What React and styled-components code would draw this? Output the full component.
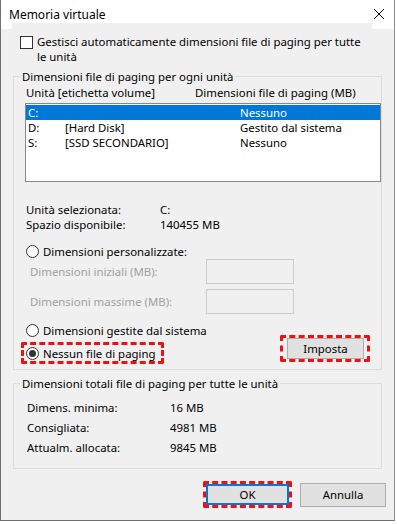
import React from 'react';
import styled, { createGlobalStyle } from 'styled-components';

const GlobalStyle = createGlobalStyle`
  html, body {
    margin: 0;
    padding: 0;
    background: #ffffff;
  }
  body {
    font-family: "Segoe UI", "Noto Sans", "Liberation Sans", sans-serif;
    font-size: 11.4px;
    color: #000;
  }
`;

const drives = [
  { letter: 'C:', label: '', size: 'Nessuno', selected: true },
  { letter: 'D:', label: '[Hard Disk]', size: 'Gestito dal sistema' },
  { letter: 'S:', label: '[SSD SECONDARIO]', size: 'Nessuno' },
];

const totals = [
  { label: 'Dimens. minima:', value: '16 MB' },
  { label: 'Consigliata:', value: '4981 MB' },
  { label: 'Attualm. allocata:', value: '9845 MB' },
];

const App = () => {
  return (
    <>
      <GlobalStyle />
      <Window>
        <TitleBar>
          <Title>Memoria virtuale</Title>
          <CloseIcon width="12" height="12" viewBox="0 0 12 12">
            <path d="M1 1 L11 11 M11 1 L1 11" stroke="#000" strokeWidth="1" fill="none" />
          </CloseIcon>
        </TitleBar>
        <Strip />
        <Body>
          <CheckRow>
            <CheckBox />
            <CheckText>
              Gestisci automaticamente dimensioni file di paging per tutte le unità
            </CheckText>
          </CheckRow>

          <Group $padBottom={5}>
            <Legend>Dimensioni file di paging per ogni unità</Legend>
            <HeaderRow>
              <span>Unità [etichetta volume]</span>
              <span>Dimensioni file di paging (MB)</span>
            </HeaderRow>
            <ListBox>
              {drives.map((d) => (
                <ListRow key={d.letter} $selected={d.selected}>
                  <LetterCell>{d.letter}</LetterCell>
                  <LabelCell>{d.label}</LabelCell>
                  <span>{d.size}</span>
                </ListRow>
              ))}
            </ListBox>

            <InfoGrid>
              <span>Unità selezionata:</span>
              <span>C:</span>
              <span>Spazio disponibile:</span>
              <span>140455 MB</span>
            </InfoGrid>

            <RadioRow $top={12}>
              <Radio />
              <span>Dimensioni personalizzate:</span>
            </RadioRow>
            <SizeRow>
              <DisabledLabel>Dimensioni iniziali (MB):</DisabledLabel>
              <SizeInput />
            </SizeRow>
            <SizeRow $top={5}>
              <DisabledLabel>Dimensioni massime (MB):</DisabledLabel>
              <SizeInput />
            </SizeRow>

            <ActionRow>
              <RadioColumn>
                <RadioRow $top={0}>
                  <Radio />
                  <span>Dimensioni gestite dal sistema</span>
                </RadioRow>
                <Highlight $pad="0 5px 0 1px" $left={-4}>
                  <RadioRow $top={1}>
                    <Radio $checked />
                    <span>Nessun file di paging</span>
                  </RadioRow>
                </Highlight>
              </RadioColumn>
              <Highlight $pad="0 3px 0 4px" $bottom={2}>
                <Button $w={77} $h={21}>Imposta</Button>
              </Highlight>
            </ActionRow>
          </Group>

          <Group $top={6} $padBottom={13}>
            <Legend>Dimensioni totali file di paging per tutte le unità</Legend>
            <TotalsGrid>
              {totals.map((t) => (
                <React.Fragment key={t.label}>
                  <span>{t.label}</span>
                  <span>{t.value}</span>
                </React.Fragment>
              ))}
            </TotalsGrid>
          </Group>

          <Footer>
            <Highlight $pad="0">
              <Button $w={83} $h={21} $default>OK</Button>
            </Highlight>
            <Button $w={86} $h={24}>Annulla</Button>
          </Footer>
        </Body>
      </Window>
    </>
  );
};

const Window = styled.div`
  width: 395px;
  height: 521px;
  box-sizing: border-box;
  border-left: 1px solid #707070;
  border-right: 1px solid #8a8a8a;
  border-bottom: 1px solid #707070;
  display: flex;
  flex-direction: column;
  background: #f0f0f0;
`;

const TitleBar = styled.div`
  height: 23px;
  background: #ffffff;
  display: flex;
  align-items: center;
  justify-content: space-between;
  padding: 0 8px 0 8px;
`;

const Title = styled.span`
  font-size: 12px;
  line-height: 15px;
  margin-top: 5px;
`;

const CloseIcon = styled.svg`
  margin-top: 5px;
  margin-right: 1px;
`;

const Strip = styled.div`
  height: 6px;
  background: linear-gradient(
    to right,
    #ffffff 11px,
    #f0f0f0 11px,
    #f0f0f0 371px,
    #ffffff 371px
  );
`;

const Body = styled.div`
  flex: 1;
  display: flex;
  flex-direction: column;
  padding: 5px 12px 0 12px;
`;

const CheckRow = styled.div`
  display: flex;
  align-items: flex-start;
  gap: 4px;
  margin-left: 7px;
`;

const CheckBox = styled.div`
  width: 13px;
  height: 13px;
  box-sizing: border-box;
  border: 1px solid #333333;
  background: #ffffff;
  margin-top: 2px;
  flex-shrink: 0;
`;

const CheckText = styled.div`
  line-height: 15px;
  width: 335px;
`;

const Group = styled.fieldset`
  margin: ${({ $top }) => $top || 5}px 0 0 0;
  border: 1px solid #dcdcdc;
  padding: 0 11px ${({ $padBottom }) => $padBottom}px 11px;
  min-width: 0;
`;

const Legend = styled.legend`
  padding: 0 2px 0 1px;
  margin-left: -4px;
  line-height: 15px;
`;

const HeaderRow = styled.div`
  display: grid;
  grid-template-columns: 169px 1fr;
  line-height: 15px;
  margin-top: 1px;
  padding-left: 1px;
`;

const ListBox = styled.div`
  margin-top: 3px;
  margin-right: -11px;
  height: 79px;
  box-sizing: border-box;
  border: 1px solid #828790;
  background: #ffffff;
  padding: 1px 0 0 0;
`;

const ListRow = styled.div`
  display: flex;
  height: 15px;
  line-height: 15px;
  padding-left: 2px;
  background: ${({ $selected }) => ($selected ? '#0078d7' : 'transparent')};
  color: ${({ $selected }) => ($selected ? '#ffffff' : '#000000')};
`;

const LetterCell = styled.span`
  width: 37px;
`;

const LabelCell = styled.span`
  width: 175px;
`;

const InfoGrid = styled.div`
  display: grid;
  grid-template-columns: 134px 1fr;
  line-height: 15px;
  margin-top: 20px;
  padding-left: 1px;
`;

const RadioRow = styled.div`
  display: flex;
  align-items: center;
  gap: 4px;
  line-height: 15px;
  margin-top: ${({ $top }) => $top}px;
  padding-left: 1px;
`;

const Radio = styled.div`
  width: 13px;
  height: 13px;
  box-sizing: border-box;
  border-radius: 50%;
  border: 1px solid #333333;
  background: #ffffff;
  display: flex;
  align-items: center;
  justify-content: center;
  flex-shrink: 0;

  &::after {
    content: '';
    width: 7px;
    height: 7px;
    border-radius: 50%;
    background: #333333;
    display: ${({ $checked }) => ($checked ? 'block' : 'none')};
  }
`;

const SizeRow = styled.div`
  display: flex;
  align-items: center;
  margin-top: ${({ $top }) => $top || 0}px;
  padding-left: 5px;
`;

const DisabledLabel = styled.span`
  width: 176px;
  color: #a0a0a0;
  line-height: 15px;
`;

const SizeInput = styled.div`
  width: 88px;
  height: 25px;
  box-sizing: border-box;
  border: 1px solid #cccccc;
  background: #f0f0f0;
`;

const ActionRow = styled.div`
  display: flex;
  justify-content: space-between;
  align-items: flex-end;
  margin-top: 9px;
`;

const RadioColumn = styled.div`
  display: flex;
  flex-direction: column;
  align-items: flex-start;
  gap: 4px;
`;

const Highlight = styled.div`
  border: 3px dashed #ee1111;
  border-radius: 2px;
  padding: ${({ $pad }) => $pad};
  margin-bottom: ${({ $bottom }) => $bottom || 0}px;
  margin-left: ${({ $left }) => $left || 0}px;
  display: flex;
  align-items: center;
`;

const Button = styled.div`
  width: ${({ $w }) => $w}px;
  height: ${({ $h }) => $h}px;
  box-sizing: border-box;
  border: ${({ $default }) => ($default ? '2px solid #0078d7' : '1px solid #adadad')};
  background: #e1e1e1;
  display: flex;
  align-items: center;
  justify-content: center;
  line-height: 15px;
`;

const TotalsGrid = styled.div`
  display: grid;
  grid-template-columns: 143px 1fr;
  row-gap: 5px;
  line-height: 15px;
  margin-top: 9px;
  padding-left: 2px;
`;

const Footer = styled.div`
  display: flex;
  justify-content: flex-end;
  align-items: center;
  gap: 8px;
  margin-top: 12px;
  margin-right: -4px;
`;

export default App;
